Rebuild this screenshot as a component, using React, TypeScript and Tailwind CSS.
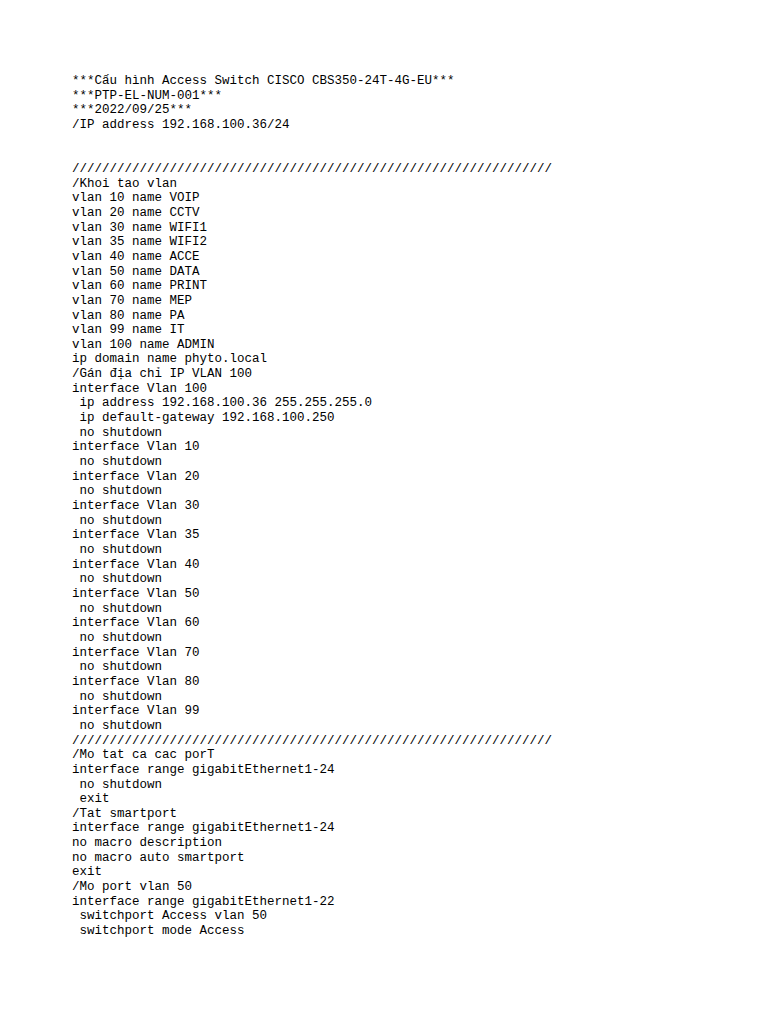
const lines: string[] = [
  "***Cấu hình Access Switch CISCO CBS350-24T-4G-EU***",
  "***PTP-EL-NUM-001***",
  "***2022/09/25***",
  "/IP address 192.168.100.36/24",
  "",
  "",
  "/".repeat(64),
  "/Khoi tao vlan",
  "vlan 10 name VOIP",
  "vlan 20 name CCTV",
  "vlan 30 name WIFI1",
  "vlan 35 name WIFI2",
  "vlan 40 name ACCE",
  "vlan 50 name DATA",
  "vlan 60 name PRINT",
  "vlan 70 name MEP",
  "vlan 80 name PA",
  "vlan 99 name IT",
  "vlan 100 name ADMIN",
  "ip domain name phyto.local",
  "/Gán địa chỉ IP VLAN 100",
  "interface Vlan 100",
  " ip address 192.168.100.36 255.255.255.0",
  " ip default-gateway 192.168.100.250",
  " no shutdown",
  "interface Vlan 10",
  " no shutdown",
  "interface Vlan 20",
  " no shutdown",
  "interface Vlan 30",
  " no shutdown",
  "interface Vlan 35",
  " no shutdown",
  "interface Vlan 40",
  " no shutdown",
  "interface Vlan 50",
  " no shutdown",
  "interface Vlan 60",
  " no shutdown",
  "interface Vlan 70",
  " no shutdown",
  "interface Vlan 80",
  " no shutdown",
  "interface Vlan 99",
  " no shutdown",
  "/".repeat(64),
  "/Mo tat ca cac porT",
  "interface range gigabitEthernet1-24",
  " no shutdown",
  " exit",
  "/Tat smartport",
  "interface range gigabitEthernet1-24",
  "no macro description",
  "no macro auto smartport",
  "exit",
  "/Mo port vlan 50",
  "interface range gigabitEthernet1-22",
  " switchport Access vlan 50",
  " switchport mode Access",
]

export default function App() {
  return (
    <main className="w-[768px] h-[1024px] bg-white overflow-hidden pt-[74px] pl-[72px]">
      <div className="font-['Liberation_Mono',monospace] text-[12.5px] leading-[14.66px] text-black">
        {lines.map((line, i) => (
          <div key={i} className="whitespace-pre h-[14.66px]">
            {line}
          </div>
        ))}
      </div>
    </main>
  )
}
